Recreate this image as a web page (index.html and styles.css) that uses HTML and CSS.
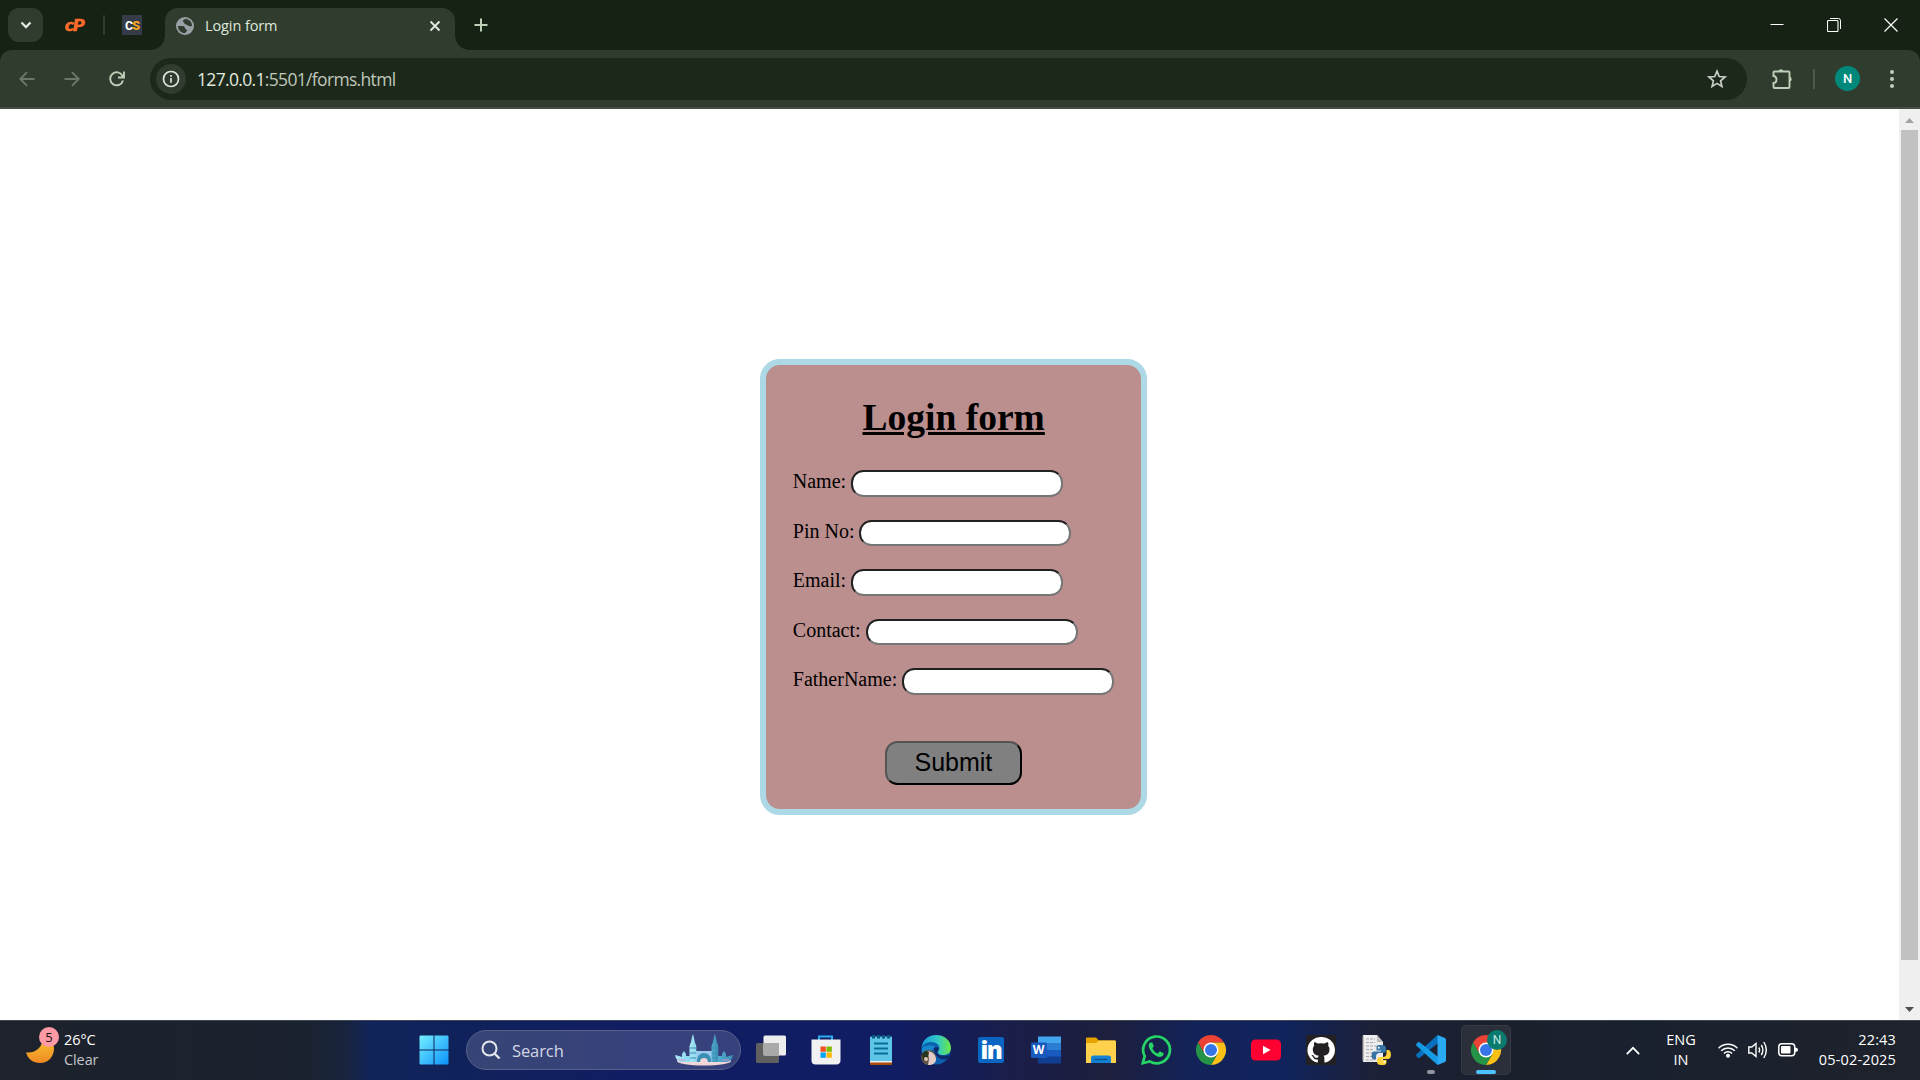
FILE: index.html
```html
<!DOCTYPE html>
<html lang="en">
<head>
<meta charset="utf-8">
<title>Login form</title>
<link rel="stylesheet" href="styles.css">
</head>
<body>
<header class="tabstrip">
  <button class="tab-search" aria-label="Search tabs"><svg width="14" height="10" viewBox="0 0 14 10"><path d="M2.500 2.500 7 7l4.500-4.500" fill="none" stroke="#e2e9df" stroke-width="2.300"/></svg></button>
  <span class="fav-cp">c<b>P</b></span>
  <i class="strip-sep"></i>
  <span class="fav-cs">C<b>S</b></span>
  <div class="tab">
    <svg width="18" height="18" viewBox="0 0 18 18"><circle cx="9" cy="9" r="9" fill="#9aa0a6"/><path d="M9.500 1.800c-1 1-2.500.8-2.600 2.500 0 1.200 1.600 1 1.600 2.200 0 1.500 2.700.8 3.500 2 .6 1 2.200.8 4.100.5A7.200 7.200 0 0 0 9.500 1.800ZM1.900 9c2 .3 5.500-.3 6.500.8.9 1 .3 2.200 1.500 2.400 1.500.2 1.200 1.500.6 2.300-.4.700-1.300.6-1.300 1.700A7.200 7.200 0 0 1 1.900 9Z" fill="#303d2e"/></svg>
    <span class="tab-title">Login form</span>
    <svg class="tab-close" width="12" height="12" viewBox="0 0 12 12"><path d="m1.500 1.500 9 9m0-9-9 9" stroke="#e2e9df" stroke-width="1.900"/></svg>
  </div>
  <svg class="new-tab" width="14" height="14" viewBox="0 0 14 14"><path d="M7 .5v13M.5 7h13" stroke="#bdd0b8" stroke-width="2"/></svg>
  <div class="window-buttons">
    <svg width="14" height="14" viewBox="0 0 14 14"><path d="M.5 6.500h13" stroke="#fff"/></svg>
    <svg width="14" height="14" viewBox="0 0 14 14"><path d="M3 .5h8.500a2 2 0 0 1 2 2V11" fill="none" stroke="#fff"/><rect x=".5" y="2.500" width="10.500" height="11" rx="1" fill="none" stroke="#fff" stroke-width="1.100"/></svg>
    <svg width="14" height="14" viewBox="0 0 14 14"><path d="m.5.5 13 13m0-13-13 13" stroke="#fff" stroke-width="1.200"/></svg>
  </div>
</header>
<nav class="toolbar">
  <svg class="nav-icon dim" width="16" height="16" viewBox="0 0 16 16"><path d="M15.500 8H1.500M8 1.200 1.300 8 8 14.800"/></svg>
  <svg class="nav-icon dim" width="16" height="16" viewBox="0 0 16 16"><path d="M.5 8h14M8 1.200 14.700 8 8 14.800"/></svg>
  <svg class="nav-icon" width="16" height="16" viewBox="0 0 16 16"><path d="M14 9.500A6.500 6.500 0 1 1 13.600 5l1 1.200M15 .5v6H9"/></svg>
  <div class="omnibox">
    <span class="site-info"><svg width="18" height="18" viewBox="0 0 18 18"><circle cx="9" cy="9" r="7.500" fill="none" stroke="#dfe5dc" stroke-width="1.700"/><path d="M9 8v4.800M9 5v1.800" stroke="#dfe5dc" stroke-width="1.700"/></svg></span>
    <span class="url">127.0.0.1<em>:5501/forms.html</em></span>
    <svg class="star" width="20" height="20" viewBox="0 0 20 20"><path d="m10 2.200 2.200 5.300 5.800.5-4.400 3.800 1.300 5.600-4.900-3-4.900 3 1.300-5.600L2 8l5.800-.5Z" fill="none" stroke="#c8cec4" stroke-width="1.700"/></svg>
  </div>
  <svg class="puzzle" width="22" height="22" viewBox="0 0 22 22"><path d="M3.500 3.500h14a1 1 0 0 1 1 1v14.500a1 1 0 0 1-1 1h-14a1 1 0 0 1-1-1v-4c4 0 4-7 0-7V4.500a1 1 0 0 1 1-1Z" fill="none" stroke="#bdd0b8" stroke-width="1.900"/><path d="M7.500 3a2.700 2.700 0 0 1 5 0ZM19 8.800a2.700 2.700 0 0 1 0 5Z" fill="#bdd0b8"/></svg>
  <i class="tool-sep"></i>
  <span class="avatar">N</span>
  <svg class="menu" width="4" height="18" viewBox="0 0 4 18"><g fill="#bdd0b8"><circle cx="2" cy="2" r="2"/><circle cx="2" cy="9" r="2"/><circle cx="2" cy="16" r="2"/></g></svg>
</nav>
<div class="viewport">
  <main class="page">
    <form class="login">
      <h1>Login form</h1>
      <label class="row">Name: <input type="text"></label>
      <label class="row">Pin No: <input type="text"></label>
      <label class="row">Email: <input type="text"></label>
      <label class="row">Contact: <input type="text"></label>
      <label class="row">FatherName: <input type="text"></label>
      <button class="submit" type="button">Submit</button>
    </form>
  </main>
  <aside class="scrollbar">
    <svg width="9" height="5" viewBox="0 0 9 5"><path d="M0 5 4.500 0 9 5Z" fill="#a3a3a3"/></svg>
    <i class="thumb"></i>
    <svg width="9" height="5" viewBox="0 0 9 5"><path d="m0 0 4.500 5L9 0Z" fill="#505050"/></svg>
  </aside>
</div>
<footer class="taskbar">
  <div class="weather">
    <div class="moon">
      <svg width="28" height="28" viewBox="0 0 28 28"><defs><linearGradient id="moon" x1="0" y1="0" x2="0" y2="1"><stop offset="0" stop-color="#f7c52e"/><stop offset="1" stop-color="#f08a24"/></linearGradient></defs><path d="M0 17.500C10 18.500 17 12 17 2c7 1 11 6 11 11.500C28 22 22 28 14 28 7 28 2 24 0 17.500Z" fill="url(#moon)"/></svg>
      <span class="badge">5</span>
    </div>
    <div class="weather-text"><span>26°C</span><span class="muted">Clear</span></div>
  </div>
  <svg class="start" width="30" height="30" viewBox="0 0 30 30"><defs><linearGradient id="win" x1="0" y1="0" x2="1" y2="1"><stop offset="0" stop-color="#76efff"/><stop offset="1" stop-color="#0a93fa"/></linearGradient></defs><path d="M1.500.5H14.500V14.500H.5V1.500a1 1 0 0 1 1-1ZM15.500.5h13a1 1 0 0 1 1 1v13h-14ZM.5 15.500h14v14H1.500a1 1 0 0 1-1-1ZM15.500 15.500h14v13a1 1 0 0 1-1 1h-13Z" fill="url(#win)"/></svg>
  <div class="search">
    <svg width="20" height="20" viewBox="0 0 20 20"><circle cx="8.500" cy="8.500" r="7" fill="none" stroke="#e4e6ec" stroke-width="2"/><path d="m13.500 13.500 5 5" stroke="#e4e6ec" stroke-width="2.400"/></svg>
    <span class="search-label">Search</span>
    <svg class="towers" width="58" height="32" viewBox="0 0 58 32"><defs><linearGradient id="tw"><stop offset="0" stop-color="#a9e6f6"/><stop offset=".5" stop-color="#72c8e4"/><stop offset="1" stop-color="#398fb5"/></linearGradient></defs><ellipse cx="29" cy="27" rx="27" ry="4.500" fill="#f1d5d9"/><path d="M20 17h19v11h-6a4.500 4.500 0 0 0-9 0h-4Z" fill="#9cc9ef"/><path d="M22 28v-2a7 7 0 0 1 14 0v2h-3a4 4 0 0 0-8 0Z" fill="#388fb2"/><path d="M14.500 28V12l1.500-4 1-5 .9-3 .9 3 1 5 1.500 4v16ZM36.500 28V12l1.500-4 1-5 .9-3 .9 3 1 5 1.500 4v16Z" fill="url(#tw)"/><path d="M0 21l4 1 3 1V20l2-3 2 3v2h4v6H6Q1 27 0 21ZM58 21l-4 1-3 1V20l-2-3-2 3v2h-4v6H52Q57 27 58 21Z" fill="url(#tw)"/><path d="M15 14h6M15 19h6M15 24h6M37 14h6M37 19h6M37 24h6" stroke="#398fb5"/><path d="M4 26h6M48 26h6" stroke="#d394c7"/></svg>
  </div>
  <div class="apps">
    <svg viewBox="0 0 30 30"><rect x="0" y="8" width="23" height="20" rx="1.500" fill="#606060"/><rect x="7.500" y=".5" width="22.500" height="20" rx="1.500" fill="#ededee"/><path d="M7.500 8H23v12.500H7.500Z" fill="#aaa"/></svg>
    <svg viewBox="0 0 30 30"><path d="M8 6V1.500h13V6" fill="none" stroke="#29aef1" stroke-width="2"/><path d="M.5 4.500h29V25a4 4 0 0 1-4 4.500h-21a4 4 0 0 1-4-4Z" fill="#f1f1f2"/><path d="M9.500 11.500h5.300v5.300H9.500Z" fill="#f25022"/><path d="M15.500 11.500h5.300v5.300h-5.300Z" fill="#7fba00"/><path d="M9.500 17.500h5.300v5.300H9.500Z" fill="#00a4ef"/><path d="M15.500 17.500h5.300v5.300h-5.300Z" fill="#ffb900"/></svg>
    <svg viewBox="0 0 30 30"><rect x="4" y="24" width="22" height="6" rx="1" fill="#a94c0c"/><path d="M4 24h22v3.500H4Z" fill="#eee"/><path d="M5 1.500h20a1 1 0 0 1 1 1V26H4V2.500a1 1 0 0 1 1-1Z" fill="#5ec5e6"/><path d="M8 8.500h14M8 13.500h14M8 18.500h14" stroke="#086f97" stroke-width="1.900"/><path d="M7.500 0v3.500M12.500 0v3.500M17.500 0v3.500M22.500 0v3.500" stroke="#075b80" stroke-width="3"/></svg>
    <svg viewBox="0 0 30 30"><defs><linearGradient id="edge"><stop offset="0" stop-color="#139bdc"/><stop offset=".55" stop-color="#32c7c7"/><stop offset="1" stop-color="#6bea45"/></linearGradient></defs><circle cx="15" cy="15" r="14.500" fill="#0c5fac"/><path d="M.5 14C1 5 7 0 15 0c9 0 15 6 15 13 0 5-4 7-8 7-4 0-6-2-4-5 2-5-3-8-8-8-5 0-9 3-9.500 7Z" fill="url(#edge)"/><path d="M13 13c2-2 4-1 5 1-5 5 0 8 12 6l-1 3c-5 3-16 2-16-10Z" fill="#10296d"/><path d="M1 13c4-4 12-3 13-1-5 2-5 12-1 17C3 28 0 22 1 13Z" fill="#1686cd"/><circle cx="7.500" cy="22.500" r="7.500" fill="#5c5548"/><path d="M6 16c5 0 9 4 9 8s-3 6-8 6l1-6Z" fill="#e5cbc7"/><path d="M1 19q3-5 7-2l-1 6-5 3Z" fill="#26361f"/><circle cx="5" cy="24" r="2" fill="#dfc3b6"/></svg>
    <span class="linkedin">in</span>
    <div class="word"><svg viewBox="0 0 30 30"><path d="M7 1.500h23v7H7Z" fill="#41a5ee"/><path d="M7 8h23v7H7Z" fill="#2b7cd3"/><path d="M7 15h23v7H7Z" fill="#185abd"/><path d="M7 21.500h23v7H7Z" fill="#103f91"/><rect x="0" y="7.500" width="16" height="15.500" rx="1.500" fill="#185abd"/></svg><b>W</b></div>
    <svg viewBox="0 0 30 30"><path d="M0 3.500a1 1 0 0 1 1-1h9l3 3h16v6H0Z" fill="#e5a200"/><path d="M0 8h10l3-2.500h16a1 1 0 0 1 1 1V28H0Z" fill="#ffd04b"/><path d="M5 28v-5a2.500 2.500 0 0 1 2.500-2.500h15A2.500 2.500 0 0 1 25 23v5Z" fill="#1481d4"/><path d="M8.500 24.500h13" stroke="#0b4f8f" stroke-width="1.300"/></svg>
    <svg viewBox="0 0 30 30"><path d="m1.800 28.200 1.900-7A13.400 13.400 0 1 1 8.600 26.400Z" fill="none" stroke="#25d366" stroke-width="2.700"/><path d="M10 7.500c-1.500 0-2.500 1.500-2.300 3.500.8 5 6.500 11 11.300 11 2.500 0 4-2 3.600-3.700l-3.800-2-2 2.200c-2.300-.8-4.600-3.200-5.400-5.300l1.500-2-1.600-3.700Z" fill="#25d366"/></svg>
    <svg viewBox="0 0 30 30"><g id="chrome"><path d="M2 7.500A15 15 0 0 1 28 7.500H15L8.500 18.800Z" fill="#ea4335"/><path d="M28 7.500A15 15 0 0 1 15 30L21.500 18.800 15 7.500Z" fill="#fbc116"/><path d="M15 30A15 15 0 0 1 2 7.500l6.500 11.300h13Z" fill="#269447"/><circle cx="15" cy="15" r="7.500" fill="#fff"/><circle cx="15" cy="15" r="6" fill="#3575e8"/></g></svg>
    <svg viewBox="0 0 30 30"><rect x="0" y="4.500" width="30" height="21" rx="4.500" fill="#ff0033"/><path d="M12 10.800v8.400l7.500-4.200Z" fill="#fff"/></svg>
    <svg viewBox="0 0 30 30"><path d="M0 0h30v30H0Z" fill="#222023"/><path d="M15 2a13 13 0 0 0-4.100 25.500c.7.100 1-.3 1-.7v-2.400c-3.600.8-4.400-1.600-4.400-1.600-.6-1.500-1.400-1.900-1.400-1.900-1.200-.8.100-.8.100-.8 1.300.1 2 1.300 2 1.300 1.200 2 3 1.400 3.800 1.100.1-.8.400-1.400.8-1.700-2.900-.4-6-1.500-6-6.500 0-1.400.6-2.600 1.400-3.500-.2-.3-.6-1.700.1-3.500 0 0 1.100-.4 3.600 1.300a12 12 0 0 1 6.500 0c2.500-1.700 3.600-1.300 3.600-1.300.7 1.800.3 3.200.1 3.500.8.900 1.400 2.100 1.400 3.500 0 5-3.100 6.100-6 6.500.5.400.9 1.200.9 2.400v3.600c0 .4.200.8 1 .7A13 13 0 0 0 15 2Z" fill="#fff"/></svg>
    <svg viewBox="0 0 30 30"><path d="M2 0h14l6 7v20H2Z" fill="#ededed"/><path d="m16 0 6 7h-6Z" fill="#bbb"/><path d="M5 4h9M5 7.500h9M5 11h14M5 14.500h8M5 18h7M5 21.500h7M5 25h9" stroke="#a7a7b0" stroke-dasharray="3 1"/><path d="M1 1h2v25H1Z" fill="#999" opacity=".6"/><path d="M19.500 10c-4 0-4 1.500-4 4v1.500H20v1h-7c-3 0-3.500 8 0 8h2v-3c0-2 1.500-3.500 3.500-3.500h4c2 0 2.500-1.500 2.500-3 0-4-.5-5-5.500-5Z" fill="#3674a6"/><path d="M21.500 30c4 0 4-1.500 4-4v-1H21v-1h6.500c3.500 0 3-9 0-9h-2v3.500c0 2-1.500 3.500-3.500 3.500h-3c-2 0-3 1-3 3 0 4 .5 5 5.500 5Z" fill="#ffd43b"/><circle cx="17.800" cy="12.800" r="1" fill="#fff"/><circle cx="23.500" cy="27" r="1" fill="#fff"/></svg>
    <div class="app-running"><svg viewBox="0 0 30 30"><path d="M.5 19.300 21.500 0 24 6.500 4 22.500Q2.500 23.500 1.500 22.500L.5 21.300Q-.3 20.300.5 19.300Z" fill="#0870bd"/><path d="M.5 10.700 21.500 30 24 23.500 4 7.500Q2.500 6.500 1.500 7.500L.5 8.700Q-.3 9.700.5 10.700Z" fill="#159ae4"/><path d="M21.500 0 29 3q1 .5 1 2v20q0 1.500-1 2l-7.500 3Z" fill="#2aaaf2"/></svg><i class="dot"></i></div>
    <div class="app-active"><svg viewBox="0 0 30 30"><use href="#chrome"/></svg><span class="profile">N</span><i class="bar"></i></div>
  </div>
  <div class="tray">
    <svg width="14" height="9" viewBox="0 0 14 9"><path d="m.8 8.200 6.200-6.400 6.200 6.400" fill="none" stroke="#fff" stroke-width="1.700"/></svg>
    <div class="lang"><span>ENG</span><span>IN</span></div>
    <div class="status">
      <svg width="20" height="16" viewBox="0 0 20 16"><g fill="none" stroke="#fff" stroke-width="1.500"><path d="M.6 6.200a13.300 13.300 0 0 1 18.800 0M3.200 8.800a9.600 9.600 0 0 1 13.600 0M5.900 11.500a5.800 5.800 0 0 1 8.200 0"/></g><circle cx="10" cy="13.800" r="2" fill="#fff"/></svg>
      <svg width="20" height="18" viewBox="0 0 20 18"><g fill="none" stroke="#fff" stroke-width="1.400"><path d="M.8 6h3L8 2.500v13L3.800 12h-3Z"/><path d="M10.800 6.500q1.600 2.500 0 5M13.300 4q3.200 5 0 10M15.800 1q5 8 0 16"/></g></svg>
      <svg width="20" height="14" viewBox="0 0 20 14"><rect x=".8" y=".8" width="15.900" height="12" rx="3" fill="none" stroke="#fff" stroke-width="1.500"/><rect x="3" y="3" width="9.500" height="7.600" rx=".8" fill="#fff"/><path d="M17 4.500q3 .3 3 2.300t-3 2.300Z" fill="#fff"/></svg>
    </div>
    <div class="clock"><span>22:43</span><span>05-02-2025</span></div>
  </div>
</footer>
</body>
</html>
```
FILE: styles.css
```css
* { box-sizing: border-box; }
body {
  margin: 0; width: 1920px; height: 1080px; overflow: hidden;
  display: flex; flex-direction: column;
  font-family: "Open Sans", "Noto Sans", sans-serif; background: #162213;
}
svg { display: block; flex: none; }
i, em { font-style: normal; }

/* Tab strip */
.tabstrip { height: 50px; flex: none; display: flex; align-items: center; padding-left: 8px; background: #162213; }
.tab-search { width: 35px; height: 34px; padding: 0; border: 0; border-radius: 11px; background: #303d2e; display: grid; place-items: center; }
.fav-cp { width: 21px; margin-left: 22px; color: #ff6c2c; font: italic 900 17px/20px "Lato", sans-serif; letter-spacing: -1px; -webkit-text-stroke: .5px #ff6c2c; white-space: nowrap; transform: scaleX(1.18); transform-origin: 0 50%; }
.fav-cp b { font-weight: 900; }
.strip-sep { width: 2px; height: 20px; margin-left: 17px; background: #303d2e; border-radius: 1px; }
.fav-cs { width: 20px; height: 20px; margin-left: 17px; background: #353b47; color: #fff; display: flex; justify-content: center; font: 700 12.500px/22px "Roboto", sans-serif; letter-spacing: -.9px; }
.fav-cs b { color: #f6a623; }
.tab { position: relative; width: 290px; height: 42px; align-self: flex-end; margin-left: 23px; padding: 0 14px 7px 11px; display: flex; align-items: center; background: #303d2e; border-radius: 13px 13px 0 0; }
.tab::before, .tab::after { content: ""; position: absolute; bottom: 0; width: 14px; height: 14px; }
.tab::before { left: -14px; background: radial-gradient(circle at 0 0, transparent 13.500px, #303d2e 14px); }
.tab::after { right: -14px; background: radial-gradient(circle at 100% 0, transparent 13.500px, #303d2e 14px); }
.tab-title { margin-left: 11px; font-size: 14.500px; line-height: 20px; color: #dfe8dc; letter-spacing: -.1px; }
.tab-close { margin-left: auto; }
.new-tab { margin-left: 19px; }
.window-buttons { margin-left: auto; padding-right: 22px; display: flex; gap: 43px; }

/* Toolbar */
.toolbar { height: 59px; flex: none; display: flex; align-items: center; padding: 0 20px 0 19.400px; border-bottom: 2px solid #434f40; border-radius: 12px 12px 0 0; background: #303d2e; }
.nav-icon { margin-right: 29px; fill: none; stroke: #bdd0b8; stroke-width: 1.900; }
.dim { stroke: #6b7868; }
.omnibox { width: 1597px; height: 42px; margin-left: -4.400px; padding: 0 19.600px 0 6px; border-radius: 21px; background: #1c291a; display: flex; align-items: center; }
.site-info { width: 30px; height: 30px; border-radius: 50%; background: #303d2e; display: grid; place-items: center; }
.url { margin-left: 11px; font-size: 17.500px; line-height: 24px; letter-spacing: -.67px; color: #e4eadf; }
.url em { color: #c0c7bc; }
.star { margin-left: auto; }
.puzzle { margin-left: 24px; }
.tool-sep { width: 2px; height: 20px; margin-left: 20px; background: #4d5c49; }
.avatar { width: 25px; height: 25px; margin-left: 20px; border-radius: 50%; background: #00897b; color: #fff; text-align: center; font: 500 13px/25px "Roboto", sans-serif; }
.menu { margin-left: 30px; }

/* Page */
.viewport { height: 911px; flex: none; display: flex; background: #fff; }
.page { flex: 1; padding: 250px 0 0 760px; font-family: "Liberation Serif", "Times New Roman", serif; }
.login { width: 387px; height: 456px; padding: 31px 26.500px 0 26.800px; border: 6px solid lightblue; border-radius: 20px; background: rosybrown; display: flex; flex-direction: column; color: #000; }
.login h1 { margin: 0 0 29px; text-align: center; font-size: 37.500px; line-height: 43px; text-decoration: underline; }
.row { height: 49.500px; font-size: 20px; line-height: 26px; white-space: nowrap; }
.row input { width: 212px; height: 26.500px; padding: 0; margin: 0; vertical-align: 0; border: 2px inset #767676; border-radius: 12.500px; background: #fff; }
.submit { width: 137px; height: 44px; margin: 25px .5px 0 0; align-self: center; border: 2px outset #000; border-radius: 12.500px; background: gray; color: #000; padding: 0 0 1px; font: 25px/28px "Liberation Sans", Arial, sans-serif; }
.scrollbar { width: 21px; background: #f0f0f0; display: flex; flex-direction: column; align-items: center; justify-content: space-between; padding: 9px 0 8px; }
.thumb { width: 17px; height: 830px; margin-bottom: 40px; background: #c1c1c1; }

/* Taskbar */
.taskbar { height: 60px; flex: none; padding-bottom: 1px; display: flex; align-items: center; border-top: 1px solid #3b4552; color: #fff; font-size: 15px; line-height: 20px; background: linear-gradient(90deg, #1d222c 0, #1b222f 300px, #18243c 345px, #11245a 370px, #10225a 450px, #111d63 640px, #111d63 900px, #1a1e48 1020px, #1d1f3c 1110px, #12235a 1200px, #10235a 1290px, #1c2038 1370px, #1b202d 1500px, #1a212e 1650px, #1e222b 1920px); }
.weather { width: 393px; padding-left: 26px; display: flex; margin-right: 26px; }
.moon { position: relative; width: 28px; height: 40px; padding-top: 5px; }
.badge { position: absolute; left: 13px; top: -3px; width: 20px; height: 20px; border-radius: 50%; background: #ff99a4; color: #111; font-size: 13px; line-height: 20px; text-align: center; }
.weather-text { display: flex; flex-direction: column; margin-left: 10px; font-size: 14.500px; letter-spacing: -.1px; }
.muted { color: #c4c6ca; }
.search { width: 275px; height: 40px; margin-left: 17px; padding: 0 7px 0 14px; display: flex; align-items: center; border: 1px solid #56608b; border-radius: 20px; background: rgba(255, 255, 255, .16); color: #d3d7e3; font-size: 16.500px; }
.search-label { margin: 1px 0 0 11px; letter-spacing: -.1px; }
.towers { margin-left: auto; }
.apps { display: flex; gap: 25px; margin-left: 15px; }
.apps svg { width: 30px; height: 30px; overflow: visible; }
.linkedin { width: 26px; height: 26px; margin: 2px; border-radius: 2px; background: #0a66c2; font: 800 24px/25px "Open Sans", sans-serif; text-align: center; letter-spacing: -1.500px; }
.word { position: relative; }
.word b { position: absolute; left: 0; top: 5px; width: 15px; text-align: center; font-size: 12px; }
.app-running { position: relative; }
.dot { position: absolute; left: 11px; top: 35px; width: 8px; height: 4px; border-radius: 2px; background: #8f939b; }
.app-active { position: relative; width: 50px; height: 50px; margin: -10px; padding: 9px; border-radius: 5px; border: 1px solid #343944; background: #2a2f3a; }
.profile { position: absolute; left: 25px; top: 4px; width: 20px; height: 20px; border-radius: 50%; background: #087b6e; color: #c9e7e2; text-align: center; font: 12px/20px "Roboto", sans-serif; }
.bar { position: absolute; left: 14px; top: 44px; width: 20px; height: 4px; border-radius: 2px; background: #4cc2ff; }
.tray { margin-left: auto; padding-right: 24px; display: flex; align-items: center; }
.lang, .clock { display: flex; flex-direction: column; font-size: 14.500px; }
.lang { width: 40px; margin-left: 21px; align-items: center; }
.status { display: flex; align-items: center; gap: 10px; margin-left: 17px; }
.clock { width: 88px; align-items: flex-end; margin-left: 10px; letter-spacing: .15px; white-space: nowrap; }
```
